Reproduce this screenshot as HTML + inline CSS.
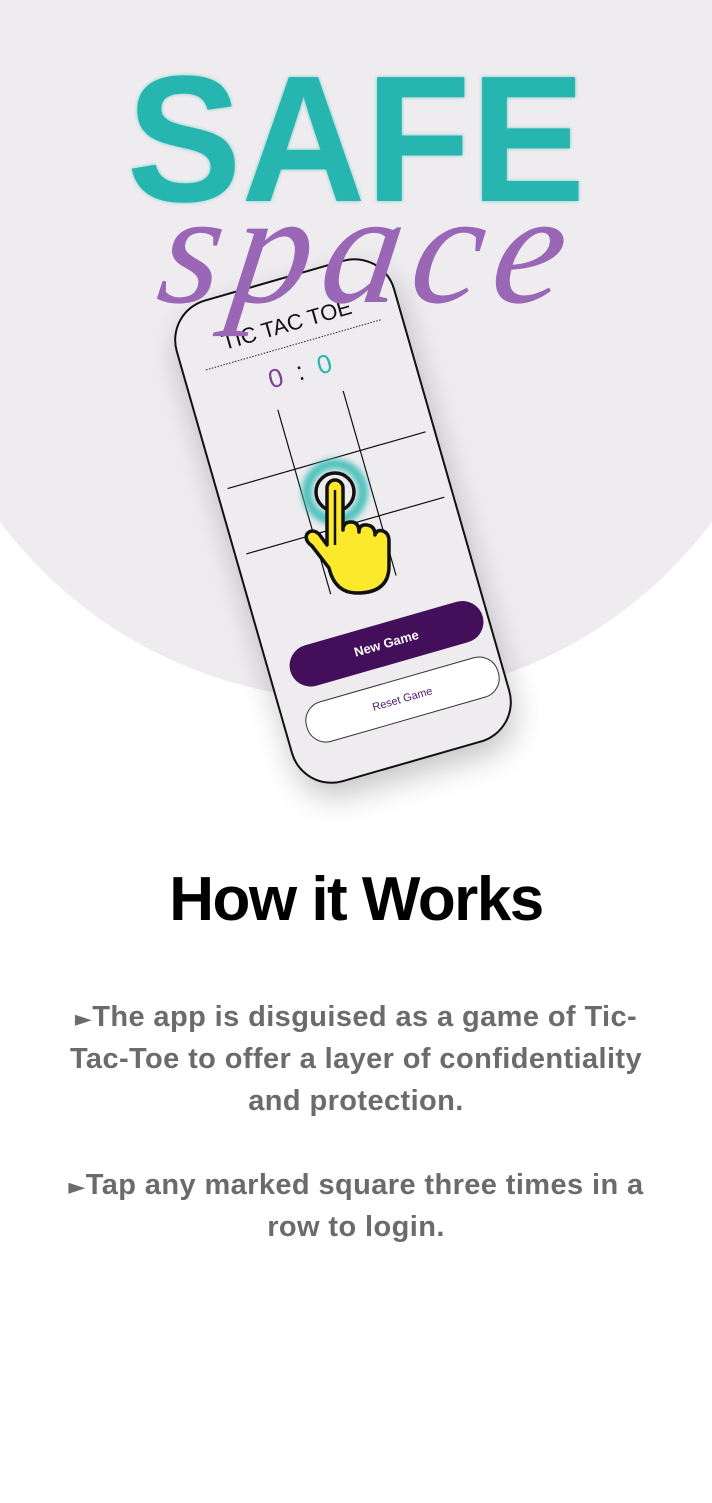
<!DOCTYPE html>
<html><head><meta charset="utf-8">
<style>
html,body{margin:0;padding:0;}
body{width:712px;height:1503px;position:relative;overflow:hidden;background:#fff;font-family:"Liberation Sans",sans-serif;}
.bg{position:absolute;left:-89px;top:-190px;width:890px;height:890px;border-radius:50%;background:#eeecef;}
.bgtop{position:absolute;left:0;top:0;width:712px;height:300px;background:#eeecef;}
.safe{position:absolute;left:0;width:712px;top:40px;text-align:center;font-weight:bold;font-size:180px;line-height:200px;color:#27b6af;letter-spacing:0px;transform:scale(0.955,1.0);text-shadow:0 0 4px rgba(39,182,175,.6);}
.space{position:absolute;left:162px;top:168px;font-family:"Liberation Serif",serif;font-style:italic;font-size:160px;line-height:160px;color:#9a66b6;letter-spacing:10px;transform:skewX(-8deg);}
.phone{position:absolute;left:229px;top:270px;width:228px;height:502px;box-sizing:border-box;border:2px solid #111;border-radius:42px;background:#eeecef;transform:rotate(-16deg);box-shadow:0 14px 30px rgba(0,0,0,.22);}
.phone .t{position:absolute;left:0;width:224px;text-align:center;}
.btn1{position:absolute;left:20px;top:358px;width:200px;height:42px;border-radius:21px;background:#430e5a;color:#fff;font-weight:bold;font-size:13px;line-height:42px;text-align:center;}
.btn2{position:absolute;left:20px;top:416px;width:198px;height:40px;border-radius:20px;background:#fff;border:1px solid #333;color:#4e1a6a;font-size:11px;line-height:40px;text-align:center;}
h1{position:absolute;left:0;width:712px;top:862px;margin:0;text-align:center;font-size:62px;line-height:76px;font-weight:bold;color:#000;letter-spacing:-1.5px;}
.p{position:absolute;left:48px;width:616px;text-align:center;font-weight:bold;font-size:29px;line-height:42px;color:#6b6b6b;letter-spacing:0.4px;}
.ar{font-family:"DejaVu Sans",sans-serif;font-size:22px;line-height:10px;}
</style></head><body>
<div class="bgtop"></div>
<div class="bg"></div>
<div class="safe">SAFE</div>
<div class="phone">
  <svg width="224" height="498" style="position:absolute;left:0;top:0">
    <line x1="22" y1="66" x2="204" y2="66" stroke="#222" stroke-width="1" stroke-dasharray="1.5,1.5"/>
    <line x1="80" y1="124" x2="80" y2="316" stroke="#111" stroke-width="1.2"/>
    <line x1="148" y1="124" x2="148" y2="316" stroke="#111" stroke-width="1.2"/>
    <line x1="10" y1="186" x2="216" y2="186" stroke="#111" stroke-width="1.2"/>
    <line x1="10" y1="254" x2="216" y2="254" stroke="#111" stroke-width="1.2"/>
  </svg>
  <div class="t" style="top:32px;font-size:22px;line-height:26px;color:#111;">TIC TAC TOE</div>
  <div class="t" style="top:78px;font-size:26px;line-height:30px;"><span style="color:#7a3f98">0</span>&nbsp;&nbsp;<span style="color:#111">:</span>&nbsp;&nbsp;<span style="color:#27b6af">0</span></div>
  <div class="btn1">New Game</div>
  <div class="btn2">Reset Game</div>
</div>
<div class="space">space</div>
<svg width="712" height="800" style="position:absolute;left:0;top:0">
  <defs><filter id="g" x="-50%" y="-50%" width="200%" height="200%"><feGaussianBlur stdDeviation="3"/></filter></defs>
  <circle cx="335" cy="492" r="28" fill="none" stroke="#3dbdb6" stroke-width="10" filter="url(#g)" opacity=".9"/>
  <circle cx="335" cy="492" r="19" fill="none" stroke="#111" stroke-width="3.5"/>
  <path d="M327,488 a8,8 0 0 1 16,0 V530 q0,-8 8,-8 q8,0 8,10 q0,-8 8,-7 q8,1 8,10 q2,-6 8,-4 q6,2 6,10 V566 q0,27 -32,27 q-22,0 -28,-25 L312,546 q-8,-6 -5,-12 q5,-6 12,0 L327,545 Z" fill="#fde92c" stroke="#111" stroke-width="3.5" stroke-linejoin="round"/>
  <line x1="335" y1="490" x2="335" y2="545" stroke="#111" stroke-width="2.5"/>
</svg>
<h1>How it Works</h1>
<div class="p" style="top:996px;"><span class="ar">►</span>The app is disguised as a game of Tic-Tac-Toe to offer a layer of confidentiality and protection.</div>
<div class="p" style="top:1164px;"><span class="ar">►</span>Tap any marked square three times in a row to login.</div>
</body></html>
